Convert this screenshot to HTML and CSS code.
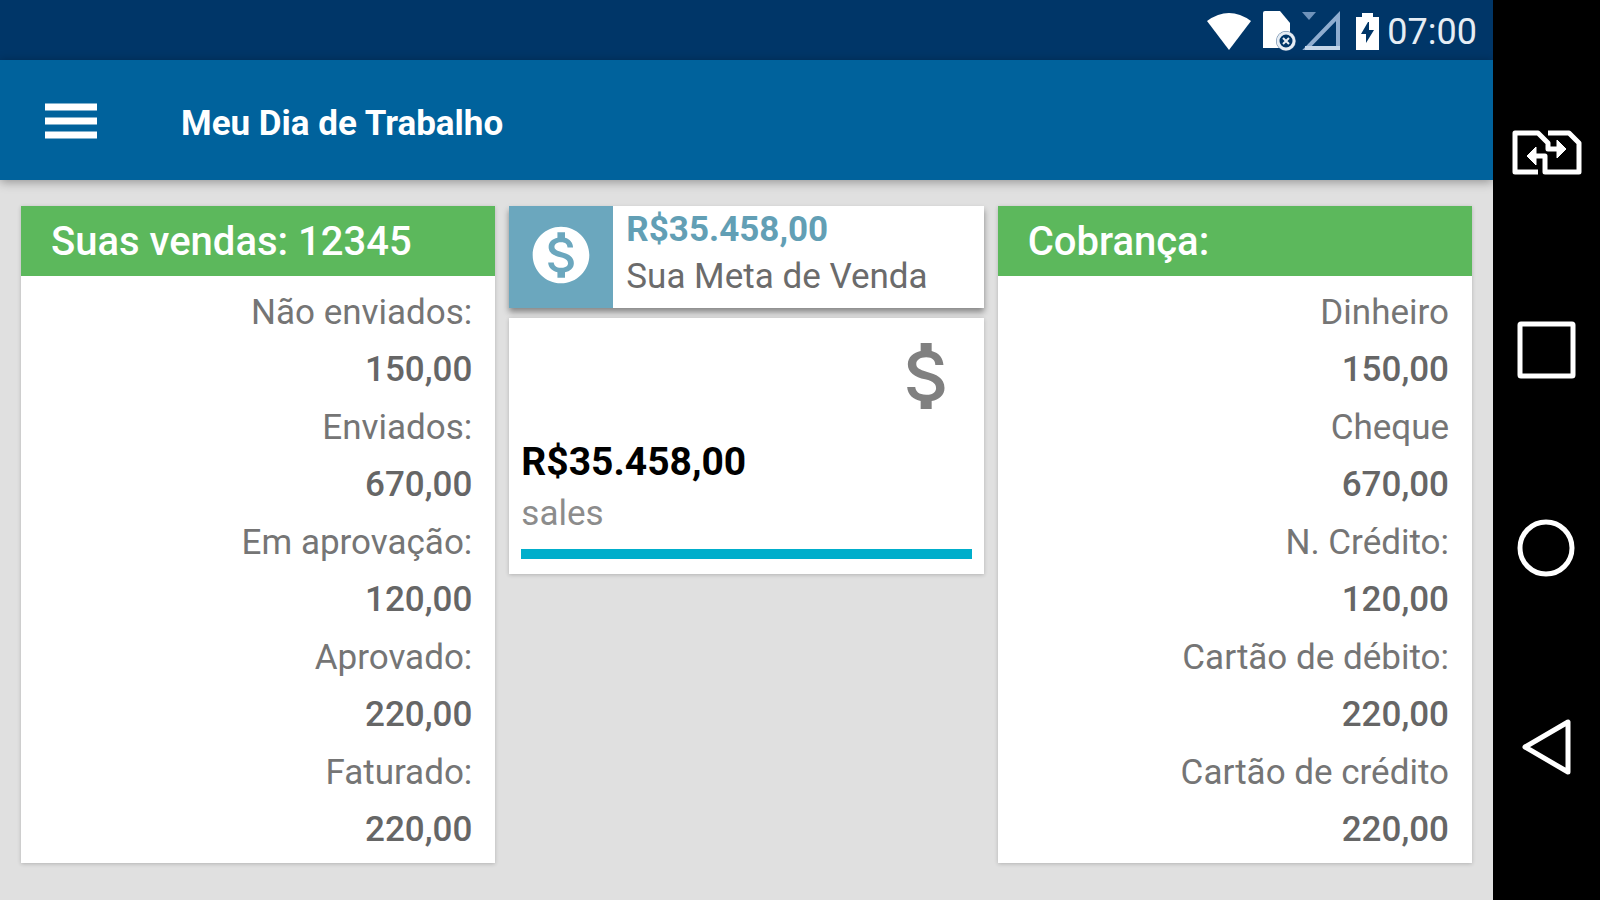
FILE: index.html
```html
<!DOCTYPE html>
<html lang="pt-BR">
<head>
    <meta charset="UTF-8">
    <meta name="viewport" content="width=device-width, initial-scale=1.0">
    <title>Meu Dia de Trabalho</title>
    <link rel="stylesheet" href="styles.css">
</head>
<body>
    <div class="app">
        <div class="status-bar">
            <svg class="status-wifi" width="44" height="37" viewBox="0 0 44 37" aria-hidden="true">
                <path d="M0 8 Q22 -8 44 8 L22 37 Z" fill="#fff"/>
            </svg>
            <svg class="status-sim" width="33" height="40" viewBox="0 0 33 40" aria-hidden="true">
                <path d="M0 2 Q0 0 2 0 H17 L27 12 V37 H0 Z" fill="#fff"/>
                <circle cx="23" cy="30" r="10" fill="#4f7299"/>
                <circle cx="23" cy="30" r="8" fill="#003668" stroke="#e6edf4" stroke-width="3"/>
                <path d="M20 27 L26 33 M26 27 L20 33" stroke="#e6edf4" stroke-width="2"/>
            </svg>
            <svg class="status-signal" width="40" height="40" viewBox="0 0 40 40" aria-hidden="true">
                <path d="M0 1 H14 L7 9 Z" fill="#6f93bb"/>
                <path d="M36 5 V37 H5 Z" fill="none" stroke="#8fadd0" stroke-width="4"/>
                <path d="M3 37 H38" stroke="#c3d5e8" stroke-width="4"/>
            </svg>
            <svg class="status-battery" width="23" height="37" viewBox="0 0 23 37" aria-hidden="true">
                <path d="M0 4 H6 V0 H17 V4 H23 V37 H0 Z" fill="#fff"/>
                <path d="M12 9 L5 21 H10 V30 L18 17 H13 V9 Z" fill="#003668"/>
            </svg>
            <span class="status-time">07:00</span>
        </div>

        <header class="toolbar">
            <button type="button" class="menu-btn" aria-label="Menu">
                <svg width="52" height="36" viewBox="0 0 52 36">
                    <path d="M0 4 H52 M0 18 H52 M0 32 H52" stroke="#fff" stroke-width="7"/>
                </svg>
            </button>
            <h1>Meu Dia de Trabalho</h1>
        </header>

        <main class="columns">
            <section class="card">
                <h2>Suas vendas: 12345</h2>
                <dl>
                    <dt>Não enviados:</dt>
                    <dd>150,00</dd>
                    <dt>Enviados:</dt>
                    <dd>670,00</dd>
                    <dt>Em aprovação:</dt>
                    <dd>120,00</dd>
                    <dt>Aprovado:</dt>
                    <dd>220,00</dd>
                    <dt>Faturado:</dt>
                    <dd>220,00</dd>
                </dl>
            </section>

            <div class="middle">
                <section class="goal">
                    <div class="goal-icon">
                        <svg width="68" height="68" viewBox="0 0 24 24" aria-hidden="true">
                            <path fill="#fff" d="M12 2C6.48 2 2 6.48 2 12s4.48 10 10 10 10-4.48 10-10S17.52 2 12 2zm1.41 16.09V20h-2.67v-1.93c-1.71-.36-3.16-1.46-3.27-3.4h1.96c.1 1.05.82 1.87 2.65 1.87 1.96 0 2.4-.98 2.4-1.59 0-.83-.44-1.61-2.67-2.14-2.48-.6-4.18-1.62-4.18-3.67 0-1.72 1.39-2.84 3.11-3.21V4h2.67v1.95c1.86.45 2.79 1.86 2.85 3.39H14.3c-.05-1.11-.64-1.87-2.22-1.87-1.5 0-2.4.68-2.4 1.64 0 .84.65 1.39 2.67 1.91s4.18 1.39 4.18 3.91c-.01 1.83-1.38 2.83-3.12 3.16z"/>
                        </svg>
                    </div>
                    <div class="goal-text">
                        <strong>R$35.458,00</strong>
                        <span>Sua Meta de Venda</span>
                    </div>
                </section>

                <section class="sales">
                    <svg class="sales-icon" width="88" height="88" viewBox="0 0 24 24" aria-hidden="true">
                        <path fill="#808080" d="M11.8 10.9c-2.27-.59-3-1.2-3-2.15 0-1.09 1.01-1.85 2.7-1.85 1.78 0 2.44.85 2.5 2.1h2.21c-.07-1.72-1.12-3.3-3.21-3.81V3h-3v2.16c-1.94.42-3.5 1.68-3.5 3.61 0 2.31 1.91 3.46 4.7 4.13 2.5.6 3 1.48 3 2.41 0 .69-.49 1.79-2.7 1.79-2.06 0-2.87-.92-2.98-2.1h-2.2c.12 2.19 1.76 3.42 3.68 3.83V21h3v-2.15c1.95-.37 3.5-1.5 3.5-3.55 0-2.84-2.43-3.81-4.7-4.4z"/>
                    </svg>
                    <strong>R$35.458,00</strong>
                    <span>sales</span>
                    <div class="sales-bar"></div>
                </section>
            </div>

            <section class="card">
                <h2>Cobrança:</h2>
                <dl>
                    <dt>Dinheiro</dt>
                    <dd>150,00</dd>
                    <dt>Cheque</dt>
                    <dd>670,00</dd>
                    <dt>N. Crédito:</dt>
                    <dd>120,00</dd>
                    <dt>Cartão de débito:</dt>
                    <dd>220,00</dd>
                    <dt>Cartão de crédito</dt>
                    <dd>220,00</dd>
                </dl>
            </section>
        </main>
    </div>

    <nav class="nav-bar">
        <button type="button" aria-label="Trocar SIM">
            <svg width="72" height="60" viewBox="0 0 72 60">
                <g fill="none" stroke="#fff" stroke-width="5" stroke-linejoin="round">
                    <path d="M27 50 H4 V11 H27 L37 21 V27 H48"/>
                    <path d="M37 11 H58 L68 21 V50 H34 V34 H24"/>
                </g>
                <path d="M46 18 L55 27 L46 36 Z M25 25 L16 34 L25 43 Z" fill="#fff" stroke="#fff" stroke-width="1"/>
            </svg>
        </button>
        <button type="button" aria-label="Recentes">
            <svg width="72" height="60" viewBox="0 0 72 60">
                <rect x="9" y="3" width="53" height="52" rx="1" fill="none" stroke="#fff" stroke-width="5"/>
            </svg>
        </button>
        <button type="button" aria-label="Início">
            <svg width="72" height="60" viewBox="0 0 72 60">
                <circle cx="35" cy="29" r="26" fill="none" stroke="#fff" stroke-width="5"/>
            </svg>
        </button>
        <button type="button" aria-label="Voltar">
            <svg width="72" height="60" viewBox="0 0 72 60">
                <path d="M14 29 L57 4 V54 Z" fill="none" stroke="#fff" stroke-width="5" stroke-linejoin="round"/>
            </svg>
        </button>
    </nav>
</body>
</html>
```

FILE: styles.css
```css
* {
    box-sizing: border-box;
}
body {
    display: flex;
    min-height: 100vh;
    margin: 0;
    font-family: Roboto, sans-serif;
    background: #e0e0e0;
}
h1, h2, dl, dd {
    margin: 0;
}
button {
    padding: 0;
    border: none;
    background: none;
    cursor: pointer;
}
svg {
    display: block;
}
.app {
    flex: 1;
    min-width: 0;
}

/* status bar */
.status-bar {
    display: flex;
    justify-content: flex-end;
    align-items: center;
    height: 60px;
    padding: 2px 16px 0 0;
    background: #003668;
    color: #e6edf4;
}
.status-sim {
    margin-left: 12px;
}
.status-signal {
    margin-left: 6px;
}
.status-battery {
    margin-left: 14px;
}
.status-time {
    margin-left: 8px;
    padding-top: 2px;
    font-size: 36px;
    line-height: 48px;
}

/* toolbar */
.toolbar {
    display: flex;
    align-items: center;
    gap: 84px;
    height: 120px;
    padding: 2px 45px 0;
    background: #00629c;
    box-shadow: 0 2px 10px rgba(0, 0, 0, 0.35);
    color: #fff;
}
.toolbar h1 {
    padding-top: 4px;
    font-size: 35px;
    font-weight: 700;
}

/* content */
.columns {
    display: grid;
    grid-template-columns: repeat(3, 1fr);
    align-items: start;
    gap: 14px;
    padding: 26px 21px 36px;
}
.card, .sales {
    background: #fff;
    box-shadow: 0 1px 4px rgba(0, 0, 0, 0.2);
}
.card h2 {
    padding: 2px 30px 0;
    background: #5cb85c;
    color: #fff;
    font-size: 40px;
    font-weight: 500;
    line-height: 68px;
}
.card dl {
    padding: 8px 23px 4px;
    text-align: right;
    font-size: 35px;
    color: #757575;
}
.card dt {
    line-height: 57px;
}
.card dd {
    line-height: 58px;
    font-weight: 500;
    color: #666;
}
.middle {
    display: grid;
    gap: 10px;
}
.goal {
    display: flex;
    background: #fff;
    box-shadow: 0 4px 6px rgba(0, 0, 0, 0.4);
}
.goal-icon {
    display: flex;
    align-items: center;
    justify-content: center;
    width: 104px;
    height: 102px;
    padding-bottom: 4px;
    background: #6ba7be;
}
.goal-text {
    display: flex;
    flex-direction: column;
    padding-left: 13px;
    font-size: 35px;
    line-height: 47px;
    color: #6b6b6b;
}
.goal-text strong {
    color: #629fb5;
}
.sales {
    display: flex;
    flex-direction: column;
    padding: 14px 12px 15px;
}
.sales-icon {
    align-self: flex-end;
}
.sales strong {
    margin-top: 16px;
    font-size: 39px;
    line-height: 53px;
    color: #000;
}
.sales span {
    font-size: 35px;
    line-height: 49px;
    color: #8c8c8c;
}
.sales-bar {
    height: 10px;
    margin-top: 11px;
    background: #00aecb;
}

/* device buttons */
.nav-bar {
    display: flex;
    flex-direction: column;
    width: 107px;
    padding: 53px 0;
    background: #000;
}
.nav-bar button {
    display: flex;
    flex: 1;
    align-items: center;
    justify-content: center;
}
```
